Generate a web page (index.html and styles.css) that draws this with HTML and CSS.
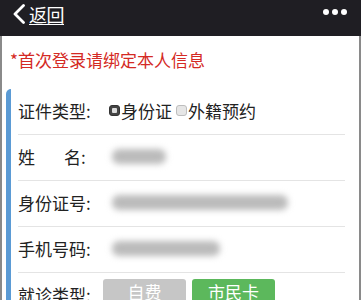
FILE: index.html
```html
<!DOCTYPE html>
<html lang="zh">
<head>
<meta charset="utf-8">
<link rel="stylesheet" href="styles.css">
</head>
<body>
<header class="topbar">
  <div class="back">
    <svg class="chev" width="14" height="20" viewBox="0 0 14 20"><path d="M11.5 1.5 L3 10 L11.5 18.5" fill="none" stroke="#fff" stroke-width="2.8" stroke-linecap="round" stroke-linejoin="round"/></svg>
    <span class="back-text">返回</span>
  </div>
  <div class="dots"><i></i><i></i><i></i></div>
</header>
<main class="page">
  <p class="notice">*首次登录请绑定本人信息</p>
  <section class="card">
    <div class="row">
      <span class="label">证件类型:</span>
      <span class="radio checked"></span><span class="opt">身份证</span>
      <span class="radio"></span><span class="opt">外籍预约</span>
    </div>
    <div class="row">
      <span class="label"><span>姓</span><span>名</span>:</span>
      <span class="blur" style="width:54px"></span>
    </div>
    <div class="row">
      <span class="label">身份证号:</span>
      <span class="blur" style="width:176px"></span>
    </div>
    <div class="row">
      <span class="label">手机号码:</span>
      <span class="blur" style="width:108px"></span>
    </div>
    <div class="row last">
      <span class="label">就诊类型:</span>
      <span class="btn grey">自费</span>
      <span class="btn green">市民卡</span>
    </div>
  </section>
</main>
</body>
</html>
```
FILE: styles.css
```css
* { box-sizing: border-box; }
html, body { margin: 0; padding: 0; }
body {
  width: 361px;
  height: 300px;
  overflow: hidden;
  background: #fff;
  font-family: "Noto Sans CJK SC", "Noto Sans", sans-serif;
}
.topbar {
  height: 36px;
  background: #1f1e23;
  display: flex;
  align-items: center;
  justify-content: space-between;
  padding: 0 14px 0 12px;
}
.back { display: flex; align-items: center; gap: 3px; margin-top: -8px; }
.back-text {
  color: #fff;
  font-size: 18px;
  line-height: 20px;
  border-bottom: 1px solid #fff;
  letter-spacing: -0.5px;
}
.dots { display: flex; gap: 3px; margin-top: -12px; }
.dots i { width: 6px; height: 6px; border-radius: 50%; background: #fff; display: block; }
.page {
  border-left: 2px solid #8a8a8a;
  border-right: 2px solid #8a8a8a;
  height: 264px;
  padding: 0 0 0 4px;
}
.notice {
  margin: 0;
  padding: 12px 0 0 4px;
  height: 53px;
  color: #d42a24;
  font-size: 17px;
  line-height: 24px;
}
.card {
  border-left: 5px solid #5b9bd5;
  border-top-left-radius: 5px;
  padding: 0 14px 0 7px;
}
.row {
  height: 46px;
  display: flex;
  align-items: center;
  padding-bottom: 3px;
  border-bottom: 1px solid #e4e4e4;
  font-size: 17px;
  color: #222;
}
.label {
  width: 91px;
  flex: none;
  display: flex;
  white-space: nowrap;
}
.label span:first-child { width: 46px; }
.radio {
  width: 11px;
  height: 11px;
  border-radius: 3px;
  background: #e6e6e6;
  border: 1px solid #bdbdbd;
  margin: 0 1px 0 0;
  position: relative;
}
.radio.checked {
  background: #444;
  border-color: #333;
}
.radio.checked::after {
  content: "";
  position: absolute;
  left: 2px; top: 2px;
  width: 5px; height: 5px;
  border-radius: 1px;
  background: #ddd;
}
.opt { margin-right: 4px; }
.blur {
  height: 15px;
  margin-left: 3px;
  background: #bbbbbb;
  border-radius: 7px;
  filter: blur(3px);
}
.row.last { border-bottom: none; align-items: flex-start; padding-top: 9px; }
.btn {
  width: 83px;
  height: 30px;
  border-radius: 3px;
  color: #fff;
  font-size: 17px;
  display: flex;
  justify-content: center;
  margin-top: -3px;
}
.btn.grey { background: #c6c6c6; margin-left: -6px; }
.btn.green { background: #5cb85c; margin-left: 6px; }
```
